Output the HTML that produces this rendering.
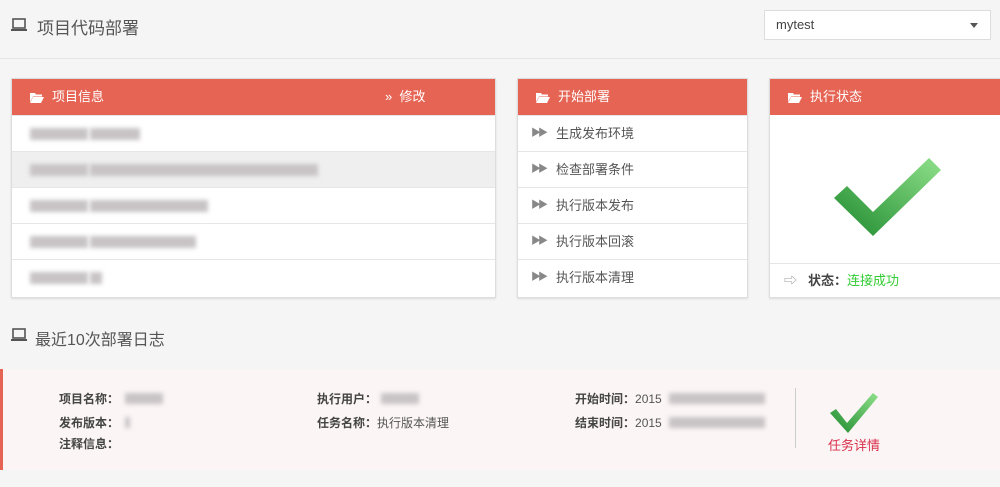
<!DOCTYPE html>
<html><head><meta charset="utf-8"><style>
*{margin:0;padding:0;box-sizing:border-box}
body{width:1000px;height:487px;background:#f5f5f5;font-family:"Liberation Sans","Noto Sans CJK SC",sans-serif;color:#555;position:relative;overflow:hidden;font-size:13px}
.abs{position:absolute}
.title{font-size:17px;color:#555}
.panel{position:absolute;background:#fff;border:1px solid #ddd;box-shadow:0 1px 2px rgba(0,0,0,.1)}
.ph{height:36px;background:#e56454;color:#fff;font-size:13px;line-height:36px;padding-left:40px;position:relative}
.row{height:36px;border-top:1px solid #e6e6e6;line-height:36px;position:relative}
.blur{position:absolute;height:12px;background:#c8c4c6;filter:blur(2px);top:12px}
.fold{position:absolute;left:18px;top:13px}
.lab{font-weight:bold;color:#444}
</style></head><body>
<svg class="abs" style="left:11px;top:18px" width="16" height="14" viewBox="0 0 16 14"><rect x="2" y="1" width="12" height="9" fill="none" stroke="#555" stroke-width="1.6"/><rect x="0" y="11" width="16" height="2" fill="#555"/></svg>
<div class="abs title" style="left:37px;top:14px">项目代码部署</div>
<div class="abs" style="left:764px;top:10px;width:227px;height:30px;background:#fff;border:1px solid #ddd;font-size:13px;line-height:28px;padding-left:11px;color:#444">mytest<span style="position:absolute;right:12px;top:12px;border:4px solid transparent;border-top:5px solid #555"></span></div>
<div class="abs" style="left:0;top:58px;width:1000px;height:1px;background:#e5e5e5"></div>

<svg width="0" height="0" style="position:absolute"><defs><symbol id="fo" viewBox="0 0 14 11"><path d="M0 1h5l1 1.5h6v2H3L0 10z M3 5h11l-3 6H0z" fill="#fff"/></symbol><linearGradient id="g" x1="0" y1="1" x2="1" y2="0"><stop offset="0" stop-color="#1e8a2e"/><stop offset="1" stop-color="#8fe08a"/></linearGradient></defs></svg>

<div class="panel" style="left:11px;top:78px;width:485px;height:220px">
<div class="ph"><svg class="fold" width="14" height="11"><use href="#fo"/></svg>项目信息<span style="position:absolute;left:373px">» &nbsp;修改</span></div>
<div class="row"><div class="blur" style="left:18px;width:58px"></div><div class="blur" style="left:78px;width:50px"></div></div>
<div class="row" style="background:#efefef"><div class="blur" style="left:18px;width:58px"></div><div class="blur" style="left:78px;width:228px"></div></div>
<div class="row"><div class="blur" style="left:18px;width:58px"></div><div class="blur" style="left:78px;width:118px"></div></div>
<div class="row"><div class="blur" style="left:18px;width:58px"></div><div class="blur" style="left:78px;width:106px"></div></div>
<div class="row"><div class="blur" style="left:18px;width:58px"></div><div class="blur" style="left:78px;width:12px"></div></div>
</div>

<div class="panel" style="left:517px;top:78px;width:231px;height:220px">
<div class="ph"><svg class="fold" width="14" height="11"><use href="#fo"/></svg>开始部署</div>
<div class="row" style="padding-left:38px">生成发布环境<span class="abs" style="left:13px;top:0;color:#888;font-size:10px;letter-spacing:-3px">▶▶</span></div>
<div class="row" style="padding-left:38px">检查部署条件<span class="abs" style="left:13px;top:0;color:#888;font-size:10px;letter-spacing:-3px">▶▶</span></div>
<div class="row" style="padding-left:38px">执行版本发布<span class="abs" style="left:13px;top:0;color:#888;font-size:10px;letter-spacing:-3px">▶▶</span></div>
<div class="row" style="padding-left:38px">执行版本回滚<span class="abs" style="left:13px;top:0;color:#888;font-size:10px;letter-spacing:-3px">▶▶</span></div>
<div class="row" style="padding-left:38px">执行版本清理<span class="abs" style="left:13px;top:0;color:#888;font-size:10px;letter-spacing:-3px">▶▶</span></div>
</div>

<div class="panel" style="left:769px;top:78px;width:240px;height:220px">
<div class="ph"><svg class="fold" width="14" height="11"><use href="#fo"/></svg>执行状态</div>
<svg class="abs" style="left:64px;top:79px" width="110" height="78" viewBox="0 0 110 78"><path d="M0 40l13-12 26 26L95 0l12 12-68 66z" fill="url(#g)"/></svg>
<div class="abs" style="left:0;top:184px;width:240px;height:36px;border-top:1px solid #e6e6e6;line-height:34px;padding-left:38px"><span class="abs" style="left:14px;color:#999">⇨</span><b style="color:#444">状态：</b><span style="color:#3c3">连接成功</span></div>
</div>

<svg class="abs" style="left:11px;top:328px" width="16" height="14" viewBox="0 0 16 14"><rect x="2" y="1" width="12" height="9" fill="none" stroke="#555" stroke-width="1.6"/><rect x="0" y="11" width="16" height="2" fill="#555"/></svg>
<div class="abs title" style="left:35px;top:326px;font-size:16px">最近10次部署日志</div>

<div class="abs" style="left:0;top:369px;width:1000px;height:101px;background:#fbf5f5;border-left:3px solid #e56454;font-size:12px">
<div class="abs" style="left:56px;top:21px"><span class="lab">项目名称：</span></div><div class="blur" style="left:122px;top:24px;width:38px;height:11px"></div>
<div class="abs" style="left:56px;top:45px"><span class="lab">发布版本：</span></div><div class="blur" style="left:122px;top:48px;width:5px;height:11px"></div>
<div class="abs" style="left:56px;top:66px"><span class="lab">注释信息：</span></div>
<div class="abs" style="left:314px;top:21px"><span class="lab">执行用户：</span></div><div class="blur" style="left:378px;top:24px;width:38px;height:11px"></div>
<div class="abs" style="left:314px;top:45px"><span class="lab">任务名称：</span>执行版本清理</div>
<div class="abs" style="left:572px;top:21px"><span class="lab">开始时间：</span>2015</div><div class="blur" style="left:666px;top:24px;width:96px;height:11px"></div>
<div class="abs" style="left:572px;top:45px"><span class="lab">结束时间：</span>2015</div><div class="blur" style="left:666px;top:48px;width:96px;height:11px"></div>
<div class="abs" style="left:792px;top:19px;width:1px;height:60px;background:#ccc"></div>
<svg class="abs" style="left:827px;top:24px" width="48" height="40" viewBox="0 0 48 40"><path d="M0 20l6-4 11 14L43 0l5 4-30 36z" fill="url(#g)"/></svg>
<div class="abs" style="left:825px;top:66px;color:#d9304a;font-size:13px">任务详情</div>
</div>
</body></html>
